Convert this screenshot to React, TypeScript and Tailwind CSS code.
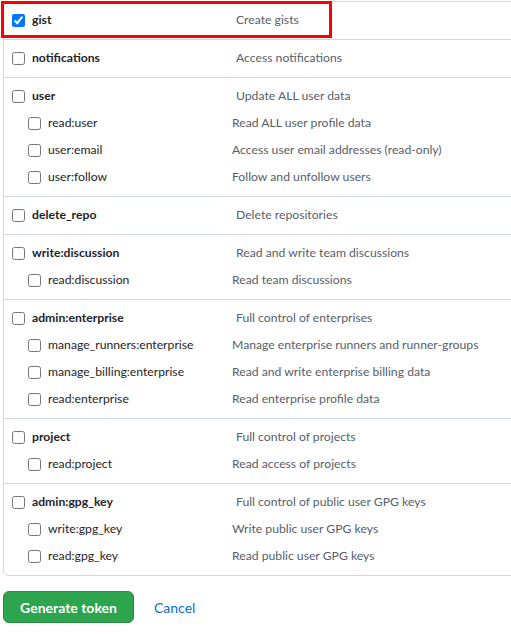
import React from 'react';

type Scope = { name: string; desc: string; checked?: boolean; children?: { name: string; desc: string }[] };

const scopes: Scope[] = [
  { name: 'gist', desc: 'Create gists', checked: true },
  { name: 'notifications', desc: 'Access notifications' },
  {
    name: 'user',
    desc: 'Update ALL user data',
    children: [
      { name: 'read:user', desc: 'Read ALL user profile data' },
      { name: 'user:email', desc: 'Access user email addresses (read-only)' },
      { name: 'user:follow', desc: 'Follow and unfollow users' },
    ],
  },
  { name: 'delete_repo', desc: 'Delete repositories' },
  {
    name: 'write:discussion',
    desc: 'Read and write team discussions',
    children: [{ name: 'read:discussion', desc: 'Read team discussions' }],
  },
  {
    name: 'admin:enterprise',
    desc: 'Full control of enterprises',
    children: [
      { name: 'manage_runners:enterprise', desc: 'Manage enterprise runners and runner-groups' },
      { name: 'manage_billing:enterprise', desc: 'Read and write enterprise billing data' },
      { name: 'read:enterprise', desc: 'Read enterprise profile data' },
    ],
  },
  {
    name: 'project',
    desc: 'Full control of projects',
    children: [{ name: 'read:project', desc: 'Read access of projects' }],
  },
  {
    name: 'admin:gpg_key',
    desc: 'Full control of public user GPG keys',
    children: [
      { name: 'write:gpg_key', desc: 'Write public user GPG keys' },
      { name: 'read:gpg_key', desc: 'Read public user GPG keys' },
    ],
  },
];

export default function App() {
  return (
    <div
      className="w-[511px] h-[634px] overflow-hidden bg-white text-[12.2px] text-[#1f2328]"
      style={{ fontFamily: 'Lato, "Noto Sans", sans-serif' }}
    >
      <div className="relative pt-[1px] pl-[3px]">
        <div className="w-[540px] border border-[#d0d7de] rounded-b-md">
          {scopes.map((s, i) => (
            <div key={s.name} className={`py-[5px] ${i > 0 ? 'border-t border-[#d0d7de]' : ''}`}>
              <div className="h-[27px] flex items-center pl-[8px]">
                <input type="checkbox" defaultChecked={s.checked} className="m-0 w-[13px] h-[13px]" />
                <span className="ml-[7px] w-[204px] font-bold">{s.name}</span>
                <span className="text-[#57606a]">{s.desc}</span>
              </div>
              {s.children?.map((c) => (
                <div key={c.name} className="h-[27px] flex items-center pl-[24px]">
                  <input type="checkbox" className="m-0 w-[13px] h-[13px]" />
                  <span className="ml-[7px] w-[184px]">{c.name}</span>
                  <span className="text-[#57606a]">{c.desc}</span>
                </div>
              ))}
            </div>
          ))}
        </div>
        {/* highlight */}
        <div className="absolute left-[1px] top-[1px] w-[331px] h-[37px] border-[3px] border-[#ff0000] pointer-events-none" />
      </div>
      <div className="flex items-center mt-[15px] pl-[3px]">
        <button className="h-[32px] w-[131px] rounded-md bg-[#2da44e] border border-[#268c42] text-white text-[14px] font-bold">
          Generate token
        </button>
        <a className="ml-[20px] text-[14px] text-[#0969da]">Cancel</a>
      </div>
    </div>
  );
}
